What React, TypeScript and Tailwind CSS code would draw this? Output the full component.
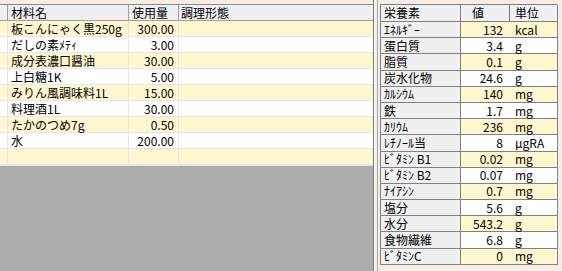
const ingredients = [
  { name: "板こんにゃく黒250g", qty: "300.00" },
  { name: "だしの素ﾒﾃｨ", qty: "3.00" },
  { name: "成分表濃口醤油", qty: "30.00" },
  { name: "上白糖1K", qty: "5.00" },
  { name: "みりん風調味料1L", qty: "15.00" },
  { name: "料理酒1L", qty: "30.00" },
  { name: "たかのつめ7g", qty: "0.50" },
  { name: "水", qty: "200.00" },
  { name: "", qty: "" },
];

const nutrients = [
  { name: "ｴﾈﾙｷﾞｰ", value: "132", unit: "kcal" },
  { name: "蛋白質", value: "3.4", unit: "g" },
  { name: "脂質", value: "0.1", unit: "g" },
  { name: "炭水化物", value: "24.6", unit: "g" },
  { name: "ｶﾙｼｳﾑ", value: "140", unit: "mg" },
  { name: "鉄", value: "1.7", unit: "mg" },
  { name: "ｶﾘｳﾑ", value: "236", unit: "mg" },
  { name: "ﾚﾁﾉｰﾙ当", value: "8", unit: "μgRA" },
  { name: "ﾋﾞﾀﾐﾝ B1", value: "0.02", unit: "mg" },
  { name: "ﾋﾞﾀﾐﾝ B2", value: "0.07", unit: "mg" },
  { name: "ﾅｲｱｼﾝ", value: "0.7", unit: "mg" },
  { name: "塩分", value: "5.6", unit: "g" },
  { name: "水分", value: "543.2", unit: "g" },
  { name: "食物繊維", value: "6.8", unit: "g" },
  { name: "ﾋﾞﾀﾐﾝC", value: "0", unit: "mg" },
];

const font = "font-['Noto_Sans_CJK_JP','Noto_Sans',sans-serif]";

export default function App() {
  return (
    <div className={`w-[562px] h-[271px] bg-[#f6eee6] flex text-[12px] leading-none text-black ${font}`}>
      {/* ingredient grid */}
      <div className="w-[374px] flex flex-col pt-[4px] border-r border-[#7a7a7a]">
        <div className="grid grid-cols-[8px_121px_50px_1fr] h-[17px] bg-[#f0f0f0] border-t border-[#8a8a8a] border-b border-b-[#a0a0a0]">
          <div className="border-r border-[#a0a0a0]" />
          <div className="border-r border-[#a0a0a0] pl-[3px] flex items-center">材料名</div>
          <div className="border-r border-[#a0a0a0] pl-[3px] flex items-center">使用量</div>
          <div className="pl-[2px] flex items-center">調理形態</div>
        </div>
        {ingredients.map((r, i) => (
          <div
            key={i}
            className={`grid grid-cols-[8px_121px_50px_1fr] h-[16px] border-b border-[#e6e6e6] ${i % 2 === 0 ? "bg-[#fff7cf]" : "bg-white"}`}
          >
            <div className="border-r border-[#e6e6e6]" />
            <div className="border-r border-[#e6e6e6] pl-[3px] flex items-center whitespace-nowrap">{r.name}</div>
            <div className="border-r border-[#e6e6e6] pr-[4px] flex items-center justify-end">{r.qty}</div>
            <div />
          </div>
        ))}
        <div className="flex-1 bg-[#acacac] border-t border-[#e6e6e6]" />
      </div>

      {/* splitter */}
      <div className="w-px bg-white" />
      <div className="w-[2px]" />
      <div className="w-px bg-[#b0a8a0]" />

      {/* nutrient grid */}
      <div className="flex-1 pl-[2px] pt-[4px]">
        <div className="w-[177px] border-t border-l border-[#808080]">
          <div className="grid grid-cols-[80px_49px_48px] h-[17px] bg-[#f0f0f0]">
            <div className="border-r border-b border-[#808080] pl-[3px] flex items-center">栄養素</div>
            <div className="border-r border-b border-[#808080] pl-[11px] flex items-center">値</div>
            <div className="border-r border-b border-[#808080] pl-[5px] flex items-center">単位</div>
          </div>
          {nutrients.map((n, i) => {
            const bg = i % 2 === 0 ? "bg-[#fff7cf]" : "bg-white";
            return (
              <div key={n.name} className="grid grid-cols-[80px_49px_48px] h-[16.2px]">
                <div className="bg-[#f0f0f0] border-r border-b border-[#808080] pl-[3px] flex items-center whitespace-nowrap">{n.name}</div>
                <div className={`${bg} border-b border-[#808080] pr-[7px] flex items-center justify-end`}>{n.value}</div>
                <div className={`${bg} border-r border-b border-[#808080] pl-[5px] flex items-center`}>{n.unit}</div>
              </div>
            );
          })}
        </div>
      </div>
    </div>
  );
}
